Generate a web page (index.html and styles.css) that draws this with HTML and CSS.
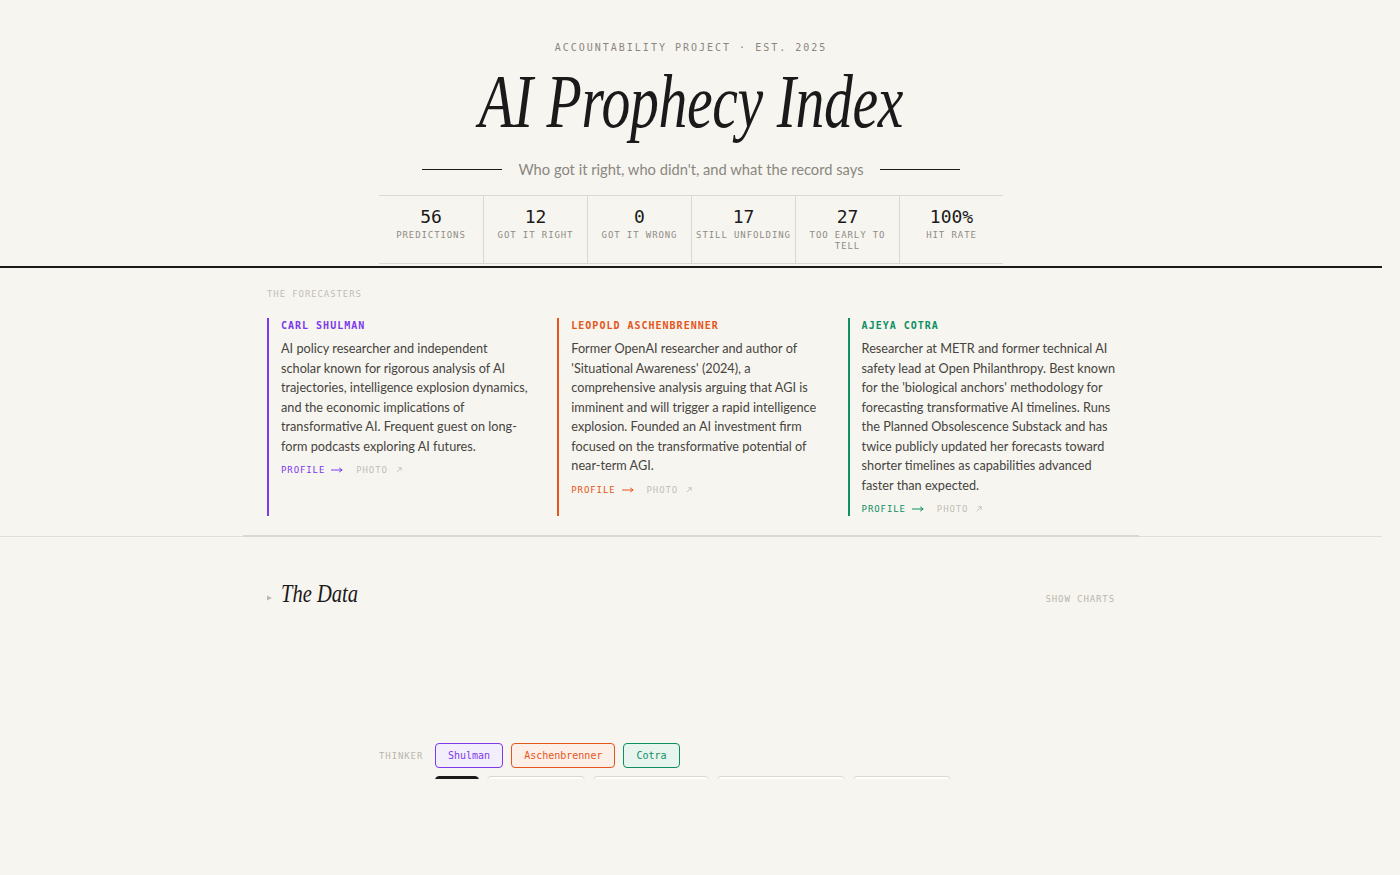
FILE: index.html
```html
<!DOCTYPE html>
<html lang="en">
<head>
<meta charset="utf-8">
<title>AI Prophecy Index</title>
<link rel="stylesheet" href="styles.css">
</head>
<body>
<div class="page">
  <header class="masthead">
    <div class="kicker">ACCOUNTABILITY PROJECT · EST. 2025</div>
    <h1 class="title"><span>AI Prophecy Index</span></h1>
    <div class="tagline">
      <span class="rule"></span>
      <p>Who got it right, who didn't, and what the record says</p>
      <span class="rule"></span>
    </div>
    <div class="stats">
      <div class="stat"><div class="num">56</div><div class="lbl">PREDICTIONS</div></div>
      <div class="stat"><div class="num">12</div><div class="lbl">GOT IT RIGHT</div></div>
      <div class="stat"><div class="num">0</div><div class="lbl">GOT IT WRONG</div></div>
      <div class="stat"><div class="num">17</div><div class="lbl">STILL UNFOLDING</div></div>
      <div class="stat"><div class="num">27</div><div class="lbl">TOO EARLY TO TELL</div></div>
      <div class="stat"><div class="num">100%</div><div class="lbl">HIT RATE</div></div>
    </div>
  </header>

  <section class="band">
    <div class="container forecasters">
      <div class="section-label">THE FORECASTERS</div>
      <div class="cards">
        <article class="card card--purple">
          <div class="card-name">CARL SHULMAN</div>
          <p class="card-desc">AI policy researcher and independent<br>scholar known for rigorous analysis of AI<br>trajectories, intelligence explosion dynamics,<br>and the economic implications of<br>transformative AI. Frequent guest on long-<br>form podcasts exploring AI futures.</p>
          <div class="card-links">
            <a class="link-profile">PROFILE <svg width="12" height="6" viewBox="0 0 12 6"><path d="M0 3H11M8.2 0.9L11.2 3L8.2 5.1" stroke="currentColor" fill="none" stroke-width="1"/></svg></a>
            <a class="link-photo">PHOTO <svg width="6" height="6" viewBox="0 0 6 6"><path d="M0.8 5.2L5.2 0.8M2.2 0.8H5.2V3.8" stroke="currentColor" fill="none" stroke-width="0.9"/></svg></a>
          </div>
        </article>
        <article class="card card--orange">
          <div class="card-name">LEOPOLD ASCHENBRENNER</div>
          <p class="card-desc">Former OpenAI researcher and author of<br>'Situational Awareness' (2024), a<br>comprehensive analysis arguing that AGI is<br>imminent and will trigger a rapid intelligence<br>explosion. Founded an AI investment firm<br>focused on the transformative potential of<br>near-term AGI.</p>
          <div class="card-links">
            <a class="link-profile">PROFILE <svg width="12" height="6" viewBox="0 0 12 6"><path d="M0 3H11M8.2 0.9L11.2 3L8.2 5.1" stroke="currentColor" fill="none" stroke-width="1"/></svg></a>
            <a class="link-photo">PHOTO <svg width="6" height="6" viewBox="0 0 6 6"><path d="M0.8 5.2L5.2 0.8M2.2 0.8H5.2V3.8" stroke="currentColor" fill="none" stroke-width="0.9"/></svg></a>
          </div>
        </article>
        <article class="card card--green">
          <div class="card-name">AJEYA COTRA</div>
          <p class="card-desc">Researcher at METR and former technical AI<br>safety lead at Open Philanthropy. Best known<br>for the 'biological anchors' methodology for<br>forecasting transformative AI timelines. Runs<br>the Planned Obsolescence Substack and has<br>twice publicly updated her forecasts toward<br>shorter timelines as capabilities advanced<br>faster than expected.</p>
          <div class="card-links">
            <a class="link-profile">PROFILE <svg width="12" height="6" viewBox="0 0 12 6"><path d="M0 3H11M8.2 0.9L11.2 3L8.2 5.1" stroke="currentColor" fill="none" stroke-width="1"/></svg></a>
            <a class="link-photo">PHOTO <svg width="6" height="6" viewBox="0 0 6 6"><path d="M0.8 5.2L5.2 0.8M2.2 0.8H5.2V3.8" stroke="currentColor" fill="none" stroke-width="0.9"/></svg></a>
          </div>
        </article>
      </div>
    </div>
  </section>

  <section class="container data">
    <div class="data-head">
      <div class="data-title">
        <svg class="tri" width="5" height="6" viewBox="0 0 5 6"><path d="M0 0.5L5 3L0 5.5Z" fill="#bdb9b1"/></svg>
        <h2>The Data</h2>
      </div>
      <button class="show-charts">SHOW CHARTS</button>
    </div>
    <div class="filters">
      <div class="filter-row">
        <span class="filter-label">THINKER</span>
        <button class="chip chip--purple">Shulman</button>
        <button class="chip chip--orange">Aschenbrenner</button>
        <button class="chip chip--green">Cotra</button>
      </div>
      <div class="filter-row filter-row--status">
        <span class="filter-label"></span>
        <span class="chip chip--active w-44"></span>
        <span class="chip chip--plain w-98"></span>
        <span class="chip chip--plain w-116"></span>
        <span class="chip chip--plain w-128"></span>
        <span class="chip chip--plain w-98"></span>
      </div>
    </div>
  </section>
</div>
</body>
</html>
```

FILE: styles.css
```css
html, body {
  margin: 0;
  background: #f7f5f0;
}
body {
  font-family: "Lato", "Noto Sans", sans-serif;
  color: #1a1a1a;
}
.page {
  width: 1382px;
}

/* ---------- masthead ---------- */
.masthead {
  text-align: center;
  padding-top: 41px;
  padding-bottom: 2px;
  border-bottom: 2px solid #1a1a1a;
}
.kicker {
  font: 10px/14px "DejaVu Sans Mono", monospace;
  letter-spacing: 2px;
  color: #8a8780;
}
.title {
  margin: 8px 0 0;
  font: italic 400 77px/77px "Liberation Serif", serif;
  color: #1a1a1a;
}
.title span {
  display: inline-block;
  transform: scaleX(0.75);
  letter-spacing: -0.5px;
}
.tagline {
  display: flex;
  align-items: center;
  justify-content: center;
  gap: 16px;
  margin-top: 19px;
}
.tagline .rule {
  width: 80px;
  height: 1px;
  background: #1a1a1a;
}
.tagline p {
  margin: 0;
  font-size: 14.7px;
  line-height: 20px;
  color: #8a8780;
}
.stats {
  display: grid;
  grid-template-columns: repeat(6, 104px);
  width: 624px;
  margin: 16px auto 0;
  border-top: 1px solid #dcd8d0;
  border-bottom: 1px solid #dcd8d0;
}
.stat {
  padding: 10px 4px 11px;
}
.stat + .stat {
  border-left: 1px solid #dcd8d0;
}
.num {
  font: 18px/22px "DejaVu Sans Mono", monospace;
  color: #1a1a1a;
}
.lbl {
  margin-top: 2px;
  font: 9px/11px "DejaVu Sans Mono", monospace;
  letter-spacing: 0.9px;
  color: #8f8c85;
}

/* ---------- forecasters ---------- */
.container {
  width: 896px;
  margin: 0 auto;
  padding: 0 24px;
  box-sizing: border-box;
}
.band {
  border-bottom: 1px solid #e2ded6;
}
.forecasters {
  padding-top: 20px;
  padding-bottom: 19px;
  margin-bottom: -1px;
  border-bottom: 2px solid #dcd8d0;
}
.section-label {
  font: 9px/12px "DejaVu Sans Mono", monospace;
  letter-spacing: 0.9px;
  color: #c2beb6;
}
.cards {
  display: grid;
  grid-template-columns: repeat(3, 1fr);
  gap: 24px;
  margin-top: 18px;
}
.card {
  border-left: 2px solid currentColor;
  padding: 1px 0 1px 12px;
}
.card--purple { color: #7c3aed; }
.card--orange { color: #e5561a; }
.card--green  { color: #0e8f63; }
.card-name {
  font: 700 10px/14px "DejaVu Sans Mono", monospace;
  letter-spacing: 1px;
}
.card-desc {
  margin: 6px 0 0;
  font-size: 12.7px;
  line-height: 19.5px;
  white-space: nowrap;
  color: #46443e;
}
.card-links {
  margin-top: 8px;
  display: flex;
  align-items: center;
  gap: 13px;
  font: 9px/12px "DejaVu Sans Mono", monospace;
  letter-spacing: 0.9px;
}
.card-links a {
  display: inline-flex;
  align-items: center;
  gap: 6px;
}
.link-photo {
  color: #c2beb6;
}
.link-photo svg {
  margin-left: 2px;
}

/* ---------- data ---------- */
.data {
  padding-top: 41px;
}
.data-head {
  display: flex;
  justify-content: space-between;
  align-items: center;
}
.data-title {
  display: flex;
  align-items: center;
  gap: 9px;
}
.tri {
  margin-top: 8px;
}
.data-title h2 {
  margin: 0;
  font: italic 400 25px/32px "Liberation Serif", serif;
  color: #1a1a1a;
  transform: scaleX(0.82);
  transform-origin: left center;
}
.show-charts {
  margin-top: 9px;
  padding: 0;
  background: none;
  border: 0;
  font: 9px/12px "DejaVu Sans Mono", monospace;
  letter-spacing: 0.9px;
  color: #b9b5ad;
}
.filters {
  width: 624px;
  margin: 133px auto 0;
  height: 36px;
  overflow: hidden;
}
.filter-row {
  display: flex;
  align-items: center;
  gap: 8px;
}
.filter-row + .filter-row {
  margin-top: 8px;
}
.filter-label {
  width: 48px;
  flex: none;
  font: 9px/12px "DejaVu Sans Mono", monospace;
  letter-spacing: 0.9px;
  color: #b9b5ad;
}
.chip {
  box-sizing: border-box;
  height: 25px;
  padding: 0 12px;
  border: 1px solid #dcd8d0;
  border-radius: 4px;
  background: #fff;
  font: 10px/23px "DejaVu Sans Mono", monospace;
  color: #6b6860;
}
.chip--purple { border-color: #7c3aed; background: #f3eefc; color: #7c3aed; }
.chip--orange { border-color: #e5561a; background: #fcefe8; color: #e5561a; }
.chip--green  { border-color: #0e8f63; background: #e8f4ee; color: #0e8f63; }
.chip--active { border-color: #1a1a1a; background: #1a1a1a; }
.w-44  { width: 44px; }
.w-98  { width: 98px; }
.w-116 { width: 116px; }
.w-128 { width: 128px; }
```
